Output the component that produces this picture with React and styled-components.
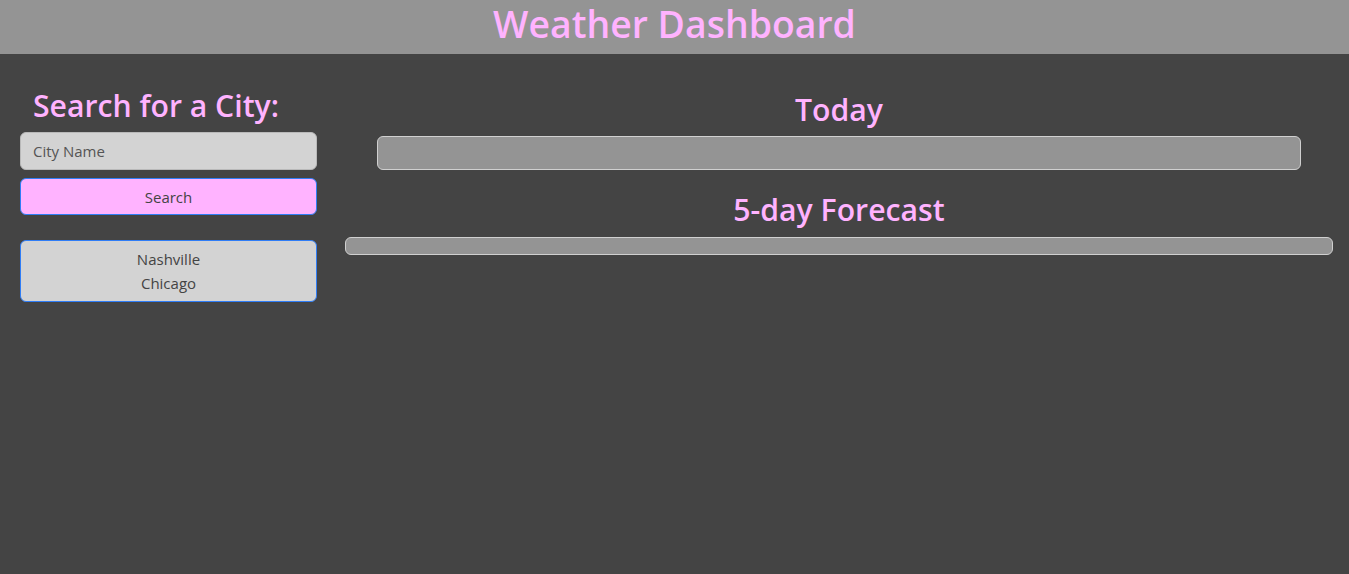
import React from "react";
import styled, { createGlobalStyle } from "styled-components";

const GlobalStyle = createGlobalStyle`
  body {
    margin: 0;
    background: #444444;
    font-family: "Open Sans", "Noto Sans", sans-serif;
    color: #444444;
  }
`;

const Header = styled.header`
  height: 54px;
  background: #949494;
  display: flex;
  justify-content: center;
  align-items: flex-start;
`;

const Title = styled.h1`
  margin: 0;
  font-size: 37.4px;
  line-height: 48px;
  font-weight: 600;
  color: #ffb3ff;
`;

const Main = styled.main`
  display: flex;
  gap: 28px;
  padding: 0 16px 0 20px;
`;

const Sidebar = styled.section`
  width: 297px;
  flex-shrink: 0;
  display: flex;
  flex-direction: column;
`;

const Content = styled.section`
  flex: 1;
  display: flex;
  flex-direction: column;
  align-items: center;
`;

const Heading = styled.h2`
  margin: ${(p) => p.$margin || "0"};
  font-size: 30.2px;
  line-height: 40px;
  font-weight: 600;
  color: #ffb3ff;
  align-self: ${(p) => (p.$left ? "flex-start" : "center")};
  padding-left: ${(p) => (p.$left ? "13px" : "0")};
`;

const CityInput = styled.input`
  box-sizing: border-box;
  height: 38px;
  width: 100%;
  padding: 0 12px;
  font: inherit;
  font-size: 15px;
  background: #d3d3d3;
  border: 1px solid #b9b9b9;
  border-radius: 6px;
  color: #444;
  &::placeholder {
    color: #555;
  }
`;

const SearchButton = styled.button`
  box-sizing: border-box;
  margin-top: 8px;
  height: 37px;
  width: 100%;
  font: inherit;
  font-size: 15px;
  color: #444;
  background: #ffb3ff;
  border: 1px solid #2f7df6;
  border-radius: 6px;
`;

const CityList = styled.ul`
  box-sizing: border-box;
  margin: 25px 0 0;
  padding: 6px 0;
  list-style: none;
  background: #d3d3d3;
  border: 1px solid #2f7df6;
  border-radius: 6px;
  text-align: center;
  font-size: 15px;
  line-height: 24px;
  color: #444;
`;

const Panel = styled.div`
  box-sizing: border-box;
  align-self: stretch;
  margin: ${(p) => (p.$inset ? "0 32px" : "0")};
  height: ${(p) => p.$height}px;
  background: #949494;
  border: 1px solid #d0d0d0;
  border-radius: 6px;
`;

const cities = ["Nashville", "Chicago"];

export default function App() {
  return (
    <>
      <GlobalStyle />
      <Header>
        <Title>Weather Dashboard</Title>
      </Header>
      <Main>
        <Sidebar>
          <Heading $left $margin="32px 0 6px">Search for a City:</Heading>
          <CityInput placeholder="City Name" />
          <SearchButton>Search</SearchButton>
          <CityList>
            {cities.map((c) => (
              <li key={c}>{c}</li>
            ))}
          </CityList>
        </Sidebar>
        <Content>
          <Heading $margin="36px 0 6px">Today</Heading>
          <Panel $inset $height={34} />
          <Heading $margin="20px 0 7px">5-day Forecast</Heading>
          <Panel $height={18} />
        </Content>
      </Main>
    </>
  );
}
